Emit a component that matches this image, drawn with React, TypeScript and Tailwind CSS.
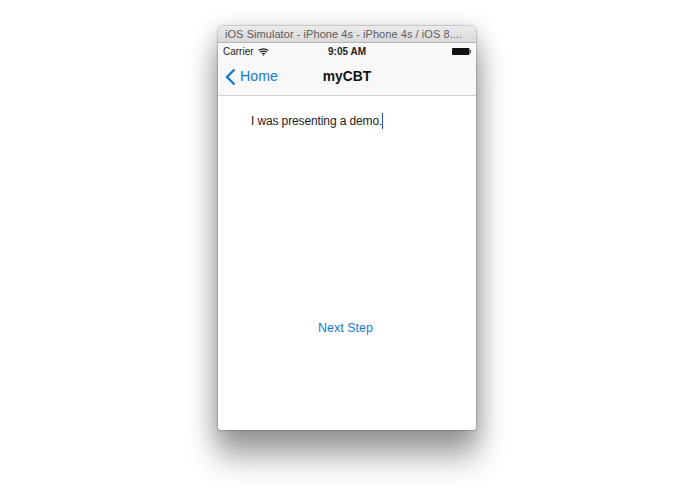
export default function App() {
  return (
    <div className="w-[695px] h-[494px] bg-white overflow-hidden pt-[26px] pl-[218px] font-['Liberation_Sans',Arial,sans-serif]">
      <div className="w-[258px] h-[404px] flex flex-col rounded-t-[5px] rounded-b-[3px] bg-white overflow-hidden shadow-[0_26px_30px_2px_rgba(0,0,0,0.32),0_0_2px_rgba(0,0,0,0.5),0_6px_24px_2px_rgba(0,0,0,0.2)]">
        <div className="h-[17px] shrink-0 bg-[linear-gradient(#ebebeb,#d9d9d9)] border-b border-[#b5b5b5] flex items-center pl-[7px] text-[11px] text-[#5c5c5c] whitespace-nowrap tracking-[0.06px]">
          iOS Simulator - iPhone 4s - iPhone 4s / iOS 8....
        </div>
        <div className="h-[53px] shrink-0 bg-[#f8f8f8] border-b border-[#d2d2d2] flex flex-col">
          <div className="h-[17px] flex items-center justify-between relative pl-[5px] pr-[5px] text-[10px] text-[#222]">
            <div className="flex items-center gap-[4px]">
              <span>Carrier</span>
              <svg width="11" height="8" viewBox="0 0 11 8" fill="none" stroke="#222" strokeWidth="1.2">
                <path d="M0.6 2.6 Q5.5 -1 10.4 2.6" />
                <path d="M2.3 4.3 Q5.5 1.8 8.7 4.3" />
                <path d="M4 6 Q5.5 4.9 7 6" />
                <circle cx="5.5" cy="7" r="0.7" fill="#222" stroke="none" />
              </svg>
            </div>
            <span className="absolute left-[110px] font-bold text-[#222]">9:05 AM</span>
            <svg width="19" height="7" viewBox="0 0 19 7">
              <rect x="0" y="0" width="17.5" height="7" rx="1" fill="#111" />
              <rect x="18" y="2.2" width="1" height="2.6" fill="#333" />
            </svg>
          </div>
          <div className="flex-1 relative flex items-center justify-center pb-[1px]">
            <div className="absolute left-[7px] flex items-center gap-[4px] text-[#147bd0] text-[14.2px]">
              <svg width="11" height="18" viewBox="0 0 11 18" fill="none" stroke="#147bd0" strokeWidth="2.4">
                <path d="M9.5 1.5 L2 9 L9.5 16.5" />
              </svg>
              <span>Home</span>
            </div>
            <span className="font-bold text-[13.8px] text-[#111]">myCBT</span>
          </div>
        </div>
        <div className="flex-1 flex flex-col relative">
          <div className="pt-[17px] pl-[33px] text-[12px] text-[#222] leading-[16px] flex items-center">
            <span className="tracking-[-0.12px]">I was presenting a demo.</span>
            <span className="inline-block w-[1px] h-[16px] bg-[#2a4fb0]" />
          </div>
          <div className="mt-[190px] pr-[3px] text-center text-[12.5px] text-[#147bd0]">Next Step</div>
        </div>
      </div>
    </div>
  );
}
